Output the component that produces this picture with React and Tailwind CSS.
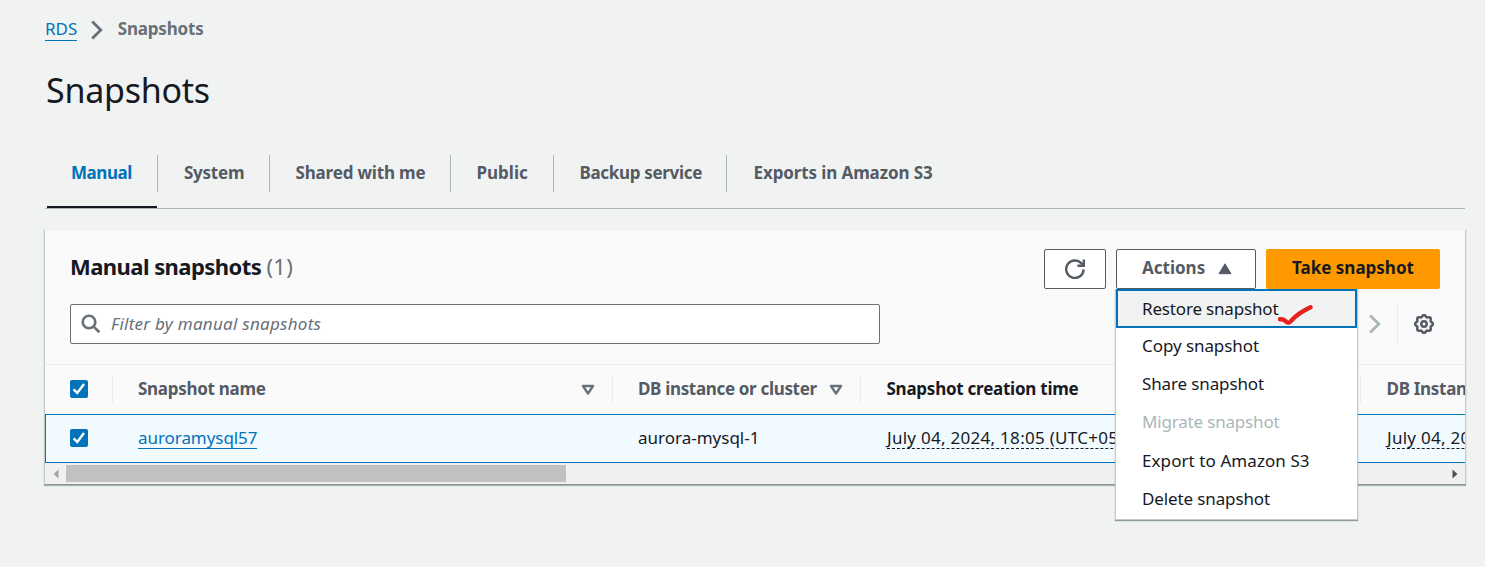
const tabs = [
  { label: "System", cls: "w-[112px] pl-[26px] tracking-[-0.25px]" },
  { label: "Shared with me", cls: "w-[181px] pl-[25.5px] tracking-[-0.17px]" },
  { label: "Public", cls: "w-[103px] pl-[25.5px]" },
  { label: "Backup service", cls: "w-[173px] pl-[25.5px] tracking-[-0.32px]" },
  { label: "Exports in Amazon S3", cls: "w-[220px] pl-[26.5px] tracking-[-0.11px]" },
];

const menuItems = [
  { label: "Copy snapshot", cls: "tracking-[-0.07px]" },
  { label: "Share snapshot", cls: "tracking-[-0.13px]" },
  { label: "Migrate snapshot", cls: "tracking-[-0.18px] text-[#aab7b8]" },
  { label: "Export to Amazon S3", cls: "tracking-[0.08px]" },
  { label: "Delete snapshot", cls: "tracking-[-0.12px]" },
];

function Checkbox() {
  return (
    <span className="flex size-[18px] shrink-0 rounded-[2px] bg-[#0073bb]">
      <svg viewBox="0 0 18 18" className="size-[18px]" fill="none" stroke="#fff" strokeWidth="2.4">
        <path d="M3.6 9.4 L7.3 13 L14 4" />
      </svg>
    </span>
  );
}

function SortIcon() {
  return (
    <svg viewBox="0 0 14 12" className="h-3 w-3.5 shrink-0" fill="none" stroke="#687078" strokeWidth="2.4" strokeLinejoin="round">
      <path d="M2 2 H12 L7 9.6 Z" />
    </svg>
  );
}

function Chevron({ className }) {
  return (
    <svg viewBox="0 0 12 20" className={className} fill="none" stroke="currentColor" strokeWidth="2.8">
      <path d="M1.2 1.4 L9.8 10 L1.2 18.6" />
    </svg>
  );
}

function RefreshIcon() {
  return (
    <svg viewBox="0 0 20 20" className="size-5" fill="none" stroke="#545b64" strokeWidth="2.4">
      <path d="M18.6 10.4 A8.7 8.7 0 1 1 16.2 4.2 L18.2 6.2" />
      <path d="M18.8 0.6 V6.8 H12.4" />
    </svg>
  );
}

function GearIcon() {
  const points = [];
  for (let i = 0; i <= 96; i++) {
    const a = (i / 96) * Math.PI * 2;
    const r = 8.1 + 0.85 * Math.cos(8 * a);
    points.push(`${(10 + r * Math.cos(a)).toFixed(2)},${(10 + r * Math.sin(a)).toFixed(2)}`);
  }
  return (
    <svg viewBox="0 0 20 20" className="size-5" fill="none" stroke="#545b64" strokeWidth="2.5">
      <polygon points={points.join(" ")} />
      <circle cx="10" cy="10" r="2.7" />
    </svg>
  );
}

function ActionsMenu() {
  return (
    <div className="absolute top-full left-[-1px] z-10 h-[231px] w-[243px] border border-[#c3cbcb] bg-white text-[#16191f] shadow-[0_1px_1px_0_rgba(0,28,36,0.4)]">
      <div className="mt-[-1px] flex h-[39px] w-[241px] items-center border-[2px] border-[#0073bb] bg-[#f1f3f3] pl-[24px] leading-6 tracking-[-0.17px]">
        Restore snapshot
      </div>
      {menuItems.map((m) => (
        <div key={m.label} className={`flex h-[38.2px] items-center pb-0.5 pl-[26px] leading-6 ${m.cls}`}>
          {m.label}
        </div>
      ))}
      <svg viewBox="0 0 36 22" className="absolute top-[14px] left-[162px] h-[22px] w-9" fill="none" stroke="#e8201e" strokeWidth="4.4" strokeLinecap="round" strokeLinejoin="round">
        <path d="M2 15.200 Q5.500 15 7.500 17 Q10.500 20.500 13.500 16.500 Q20 9 32.500 3.200" />
      </svg>
    </div>
  );
}

export default function App() {
  return (
    <div className="flex h-[567px] w-[1485px] flex-col overflow-hidden bg-[#f1f3f3] pl-[45px] pr-5 font-['Noto_Sans',sans-serif] text-[17px] text-[#16191f]">
      <nav className="flex h-[58px] items-center">
        <a className="-mt-px h-[24px] border-b border-[#0073bb] leading-[24px] text-[#0073bb]">RDS</a>
        <Chevron className="mt-[2px] ml-[14px] h-5 w-3 text-[#687078]" />
        <span className="ml-[14.5px] font-bold tracking-[-0.2px] text-[#687078]">Snapshots</span>
      </nav>

      <h1 className="mt-[9px] h-12 pl-px text-[34px] leading-[47px] tracking-[-0.25px]">Snapshots</h1>

      <div className="mt-10 flex h-[54px] shrink-0 border-b border-[#aab7b8] font-bold whitespace-nowrap text-[#545b64]">
        <div className="ml-0.5 flex w-[110px] flex-col border-b-2 border-[#16191f]">
          <span className="pl-[24px] leading-[36px] tracking-[-0.45px] text-[#0073bb]">Manual</span>
        </div>
        {tabs.map((t) => (
          <div key={t.label} className={`h-[37px] border-l border-[#aab7b8] leading-[36px] ${t.cls}`}>
            {t.label}
          </div>
        ))}
      </div>

      <section className="-ml-px mt-5 flex h-[256px] w-[1422px] shrink-0 flex-col border border-t-[#eaeded] border-r-[#c3cbcb] border-b-[#879596] border-l-[#c3cbcb] bg-[#fafafa] shadow-[0_1px_1px_0_rgba(0,28,36,0.3)]">
        <div className="flex h-[59px] items-end justify-between pr-[25px] pl-[25px]">
          <h2 className="mb-[7px] text-[22px] leading-8 font-bold tracking-[-0.55px]">
            Manual snapshots <span className="font-normal tracking-[0.3px] text-[#687078]">(1)</span>
          </h2>
          <div className="flex gap-2.5">
            <button className="flex h-10 w-[62px] items-center justify-center rounded-[2px] border border-[#545b64] bg-white">
              <RefreshIcon />
            </button>
            <div className="relative">
              <button className="flex h-10 w-[140px] items-center rounded-[2px] border border-[#545b64] bg-white pb-0.5 pl-[25px] font-bold text-[#545b64]">
                Actions
                <svg viewBox="0 0 14 12" className="mt-0.5 ml-[13px] h-3 w-3.5" fill="#545b64">
                  <path d="M7 0.800 L13 10.700 H1 Z" stroke="#545b64" strokeLinejoin="round" />
                </svg>
              </button>
              <ActionsMenu />
            </div>
            <button className="h-10 w-[174px] rounded-[2px] bg-[#ff9900] pb-0.5 font-bold">Take snapshot</button>
          </div>
        </div>

        <div className="mt-[15px] flex h-10 items-center justify-between pl-[25px]">
          <div className="flex h-10 w-[810px] items-center rounded-[2px] border border-[#687078] bg-white pl-2.5">
            <svg viewBox="0 0 20 20" className="size-5" fill="none" stroke="#687078" strokeWidth="2.6">
              <circle cx="8" cy="8" r="6.300" />
              <path d="M12.600 12.600 L18.400 18.200" />
            </svg>
            <span className="ml-2.5 tracking-[0.27px] text-[#687078] italic">Filter by manual snapshots</span>
          </div>
          <div className="flex items-center pr-[31px]">
            <Chevron className="h-5 w-3 text-[#aab7b8]" />
            <div className="ml-4 h-10 w-px bg-[#eaeded]" />
            <div className="ml-4">
              <GearIcon />
            </div>
          </div>
        </div>

        <div className="mt-5 flex h-[50px] items-center overflow-hidden border-t border-[#eaeded] font-bold text-[#545b64]">
          <div className="flex h-[26px] w-[67px] shrink-0 items-center pb-0.5 pl-[25px]">
            <Checkbox />
          </div>
          <div className="flex h-[26px] w-[500px] shrink-0 items-center justify-between border-l border-[#eaeded] pr-[17px] pb-0.5 pl-[25px] leading-6 tracking-[-0.28px]">
            Snapshot name
            <span className="pt-0.5"><SortIcon /></span>
          </div>
          <div className="flex h-[26px] w-[248px] shrink-0 items-center justify-between border-l border-[#eaeded] pr-[17px] pb-0.5 pl-[25px] leading-6 tracking-[-0.33px]">
            DB instance or cluster
            <span className="pt-0.5"><SortIcon /></span>
          </div>
          <div className="h-[26px] w-[500px] shrink-0 border-l border-[#eaeded] pl-[25.5px] leading-6 tracking-[-0.25px] text-[#16191f]">Snapshot creation time</div>
          <div className="h-[26px] shrink-0 border-l border-[#eaeded] pl-[25.5px] leading-6 tracking-[-0.3px] whitespace-nowrap">DB Instance created time</div>
        </div>

        <div className="flex h-[49px] shrink-0 items-center overflow-hidden border border-r-0 border-[#0073bb] bg-[#f1faff]">
          <div className="w-[67px] shrink-0 pb-px pl-6">
            <Checkbox />
          </div>
          <div className="w-[500px] shrink-0 pb-0.5 pl-[25px]">
            <a className="inline-block h-[23px] border-b border-[#0073bb] leading-[23px] tracking-[-0.06px] text-[#0073bb]">auroramysql57</a>
          </div>
          <div className="w-[248px] shrink-0 pb-0.5 pl-[25px]">aurora-mysql-1</div>
          <div className="w-[500px] shrink-0 pb-0.5 pl-[26px]">
            <span className="inline-block h-[23px] border-b border-dashed border-[#16191f] leading-[23px] tracking-[0.28px]">July 04, 2024, 18:05 (UTC+05:30)</span>
          </div>
          <div className="shrink-0 pb-0.5 pl-[26px]">
            <span className="inline-block h-[23px] border-b border-dashed border-[#16191f] leading-[23px] tracking-[0.28px] whitespace-nowrap">July 04, 2024, 17:10 (UTC+05:30)</span>
          </div>
        </div>

        <div className="flex h-[21px] items-center bg-[#f0f0f0] pr-[7px] pl-2">
          <svg viewBox="0 0 6 10" className="h-2.5 w-1.5" fill="#a3a3a3">
            <path d="M5.500 0.500 V9.500 L0.500 5 Z" />
          </svg>
          <div className="ml-[7px] h-[17px] w-[500px] bg-[#c1c1c1]" />
          <svg viewBox="0 0 6 10" className="ml-auto h-2.5 w-1.5" fill="#505050">
            <path d="M0.500 0.500 V9.500 L5.500 5 Z" />
          </svg>
        </div>
      </section>
    </div>
  );
}
